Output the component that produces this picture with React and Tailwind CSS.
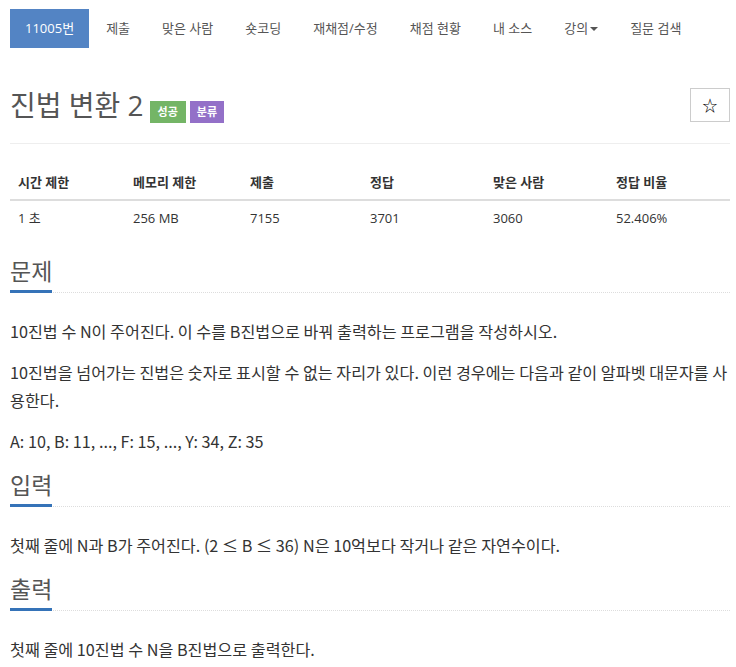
const tabs = ['제출', '맞은 사람', '숏코딩', '재채점/수정', '채점 현황', '내 소스', '강의', '질문 검색'];

const cols = [
  { head: '시간 제한', val: '1 초', w: 'w-[115px]' },
  { head: '메모리 제한', val: '256 MB', w: 'w-[117px]' },
  { head: '제출', val: '7155', w: 'w-[120px]' },
  { head: '정답', val: '3701', w: 'w-[123px]' },
  { head: '맞은 사람', val: '3060', w: 'w-[123px]' },
  { head: '정답 비율', val: '52.406%', w: 'flex-1' },
];

function Headline({ children }) {
  return (
    <div className="border-b border-dotted border-[#ddd] mb-[24px]">
      <span className="inline-block -mb-px border-b-[3px] border-[#3573b8] pb-[4px] text-[23px] leading-[32px] text-[#555]">
        {children}
      </span>
    </div>
  );
}

export default function App() {
  return (
    <div
      className="w-[736px] pl-[10px] pr-[6px] pt-[9px] pb-4 bg-white text-[#333]"
      style={{ fontFamily: '"Open Sans", "Noto Sans CJK KR", sans-serif' }}
    >
      {/* Nav pills */}
      <ul className="flex gap-[2px] text-[13px] leading-[19px]">
        <li className="px-[15px] py-[10px] bg-[#5384c4] text-white">11005번</li>
        {tabs.map((t) => (
          <li key={t} className="px-[15px] py-[10px] text-[#555] flex items-center">
            {t}
            {t === '강의' && (
              <span className="ml-[2px] inline-block w-0 h-0 border-x-[4px] border-x-transparent border-t-[4px] border-t-[#555]" />
            )}
          </li>
        ))}
      </ul>

      {/* Title */}
      <div className="mt-[37px] pb-[18px] border-b border-[#eee] flex items-center justify-between">
        <div className="flex items-center">
          <h1 className="text-[28px] leading-[40px] text-[#555]">진법 변환 2</h1>
          <span className="ml-[6px] mt-[14px] px-[8px] h-[22px] leading-[22px] bg-[#74b566] text-white text-[11px] font-bold">성공</span>
          <span className="ml-[4px] mt-[14px] px-[7px] h-[22px] leading-[22px] bg-[#9370c8] text-white text-[11px] font-bold">분류</span>
        </div>
        <button className="w-[40px] h-[34px] border border-[#ccc] flex items-center justify-center text-[15px] text-black">
          ☆
        </button>
      </div>

      {/* Info table */}
      <div className="mt-[21px] mb-[19px] text-[13px] leading-[18px]">
        <div className="flex border-b-2 border-[#ddd]">
          {cols.map((c) => (
            <div key={c.head} className={`${c.w} p-[8px] font-bold`}>{c.head}</div>
          ))}
        </div>
        <div className="flex">
          {cols.map((c) => (
            <div key={c.head} className={`${c.w} p-[8px]`}>{c.val}</div>
          ))}
        </div>
      </div>

      <div style={{ fontFamily: '"Noto Sans CJK KR", sans-serif' }} className="text-[16.2px] leading-[28px] text-[#333] break-all">
        <Headline>문제</Headline>
        <p className="mb-[13px]">10진법 수 N이 주어진다. 이 수를 B진법으로 바꿔 출력하는 프로그램을 작성하시오.</p>
        <p className="mb-[13px]">10진법을 넘어가는 진법은 숫자로 표시할 수 없는 자리가 있다. 이런 경우에는 다음과 같이 알파벳 대문자를 사용한다.</p>
        <p className="mb-[13px]">A: 10, B: 11, ..., F: 15, ..., Y: 34, Z: 35</p>

        <Headline>입력</Headline>
        <p className="mb-[13px]">첫째 줄에 N과 B가 주어진다. (2 ≤ B ≤ 36) N은 10억보다 작거나 같은 자연수이다.</p>

        <Headline>출력</Headline>
        <p>첫째 줄에 10진법 수 N을 B진법으로 출력한다.</p>
      </div>
    </div>
  );
}
